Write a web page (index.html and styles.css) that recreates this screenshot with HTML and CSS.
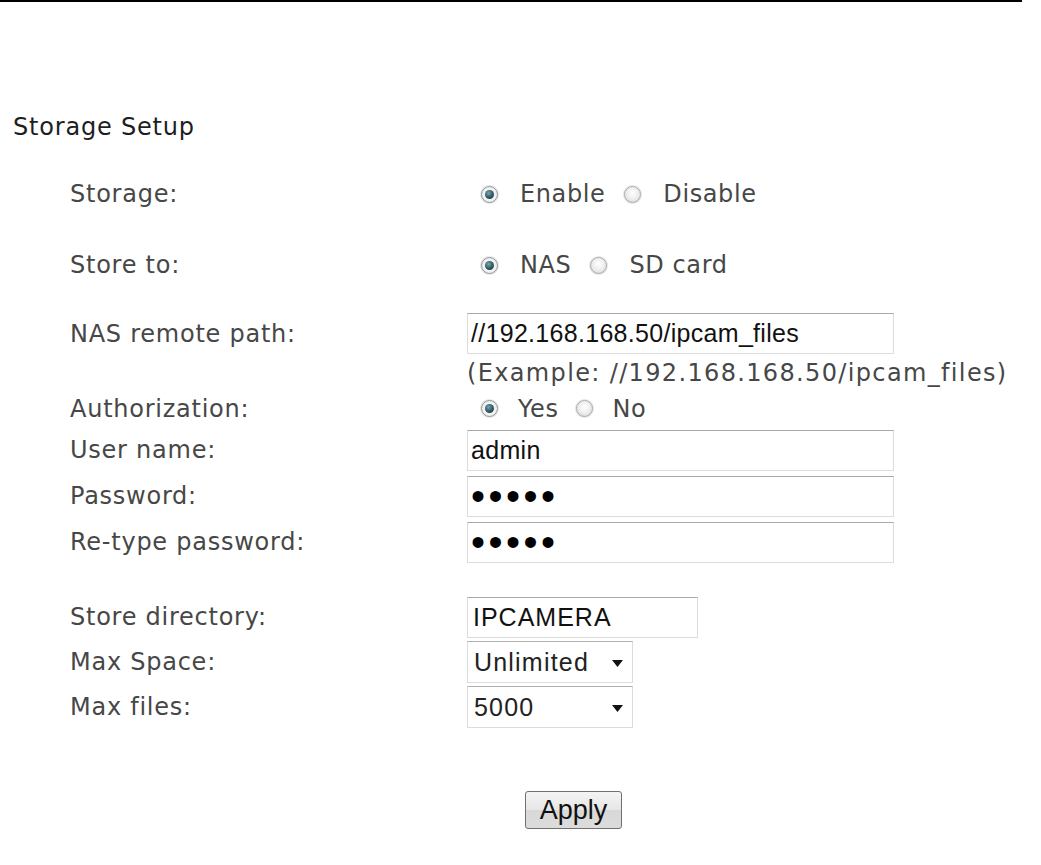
FILE: index.html
```html
<!DOCTYPE html>
<html>
<head>
<meta charset="utf-8">
<link rel="stylesheet" href="styles.css">
</head>
<body>
<div class="topline"></div>
<div class="page">
  <div class="title">Storage Setup</div>
  <div class="form">
    <div class="row r-storage">
      <div class="label">Storage:</div>
      <div class="value radios">
        <span class="radio on"></span><span class="rtext">Enable</span>
        <span class="radio"></span><span class="rtext">Disable</span>
      </div>
    </div>
    <div class="row r-storeto">
      <div class="label">Store to:</div>
      <div class="value radios">
        <span class="radio on"></span><span class="rtext">NAS</span>
        <span class="radio"></span><span class="rtext">SD card</span>
      </div>
    </div>
    <div class="row r-nas">
      <div class="label">NAS remote path:</div>
      <div class="value"><input class="field wide" type="text" value="//192.168.168.50/ipcam_files"></div>
    </div>
    <div class="row r-example">
      <div class="label"></div>
      <div class="value example">(Example: //192.168.168.50/ipcam_files)</div>
    </div>
    <div class="row r-auth">
      <div class="label">Authorization:</div>
      <div class="value radios tight">
        <span class="radio on"></span><span class="rtext">Yes</span>
        <span class="radio"></span><span class="rtext">No</span>
      </div>
    </div>
    <div class="row r-user">
      <div class="label">User name:</div>
      <div class="value"><input class="field wide" type="text" value="admin"></div>
    </div>
    <div class="row r-pass">
      <div class="label">Password:</div>
      <div class="value"><input class="field wide pw" type="password" value="admin"></div>
    </div>
    <div class="row r-pass">
      <div class="label">Re-type password:</div>
      <div class="value"><input class="field wide pw" type="password" value="admin"></div>
    </div>
    <div class="row r-dir">
      <div class="label">Store directory:</div>
      <div class="value"><input class="field short loose" type="text" value="IPCAMERA"></div>
    </div>
    <div class="row r-sel">
      <div class="label">Max Space:</div>
      <div class="value">
        <div class="select"><span>Unlimited</span>
          <svg class="arrow" width="11" height="7" viewBox="0 0 11 7"><path d="M0 0 H11 L5.5 7 Z" fill="#111"/></svg>
        </div>
      </div>
    </div>
    <div class="row r-sel">
      <div class="label">Max files:</div>
      <div class="value">
        <div class="select"><span>5000</span>
          <svg class="arrow" width="11" height="7" viewBox="0 0 11 7"><path d="M0 0 H11 L5.5 7 Z" fill="#111"/></svg>
        </div>
      </div>
    </div>
  </div>
  <div class="actions"><button class="apply" type="button">Apply</button></div>
</div>
</body>
</html>
```
FILE: styles.css
```css
html, body {
  margin: 0;
  padding: 0;
  background: #fff;
}
body {
  font-family: "DejaVu Sans", Verdana, sans-serif;
  color: #444;
}
.topline {
  width: 1022px;
  height: 2px;
  background: #000;
}
.page {
  padding-top: 110px;
}
.title {
  margin-left: 13px;
  font-size: 24px;
  letter-spacing: 0.8px;
  color: #1e1e1e;
  line-height: 30px;
}
.form {
  margin-top: 34px;
}
.row {
  display: flex;
  align-items: center;
}
.label {
  width: 397px;
  padding-left: 70px;
  font-size: 24px;
  letter-spacing: 0.75px;
  color: #474747;
  flex: none;
}
.value {
  display: flex;
  align-items: center;
}
.r-storage { height: 36px; }
.r-storeto { height: 36px; margin-top: 35px; }
.r-nas { height: 41px; margin-top: 30px; }
.r-example { height: 38px; }
.r-auth { height: 33px; }
.r-user { height: 42px; margin-top: 4px; }
.r-pass { height: 42px; margin-top: 4px; }
.r-dir { height: 42px; margin-top: 33px; }
.r-sel { height: 42px; margin-top: 3px; }

.radios {
  font-size: 24px;
  letter-spacing: 0.6px;
  color: #474747;
  padding-left: 14px;
}
.radio {
  width: 15px;
  height: 15px;
  border-radius: 50%;
  border: 1px solid #a9a9a9;
  background: radial-gradient(circle at 50% 40%, #ffffff 0%, #ececec 55%, #cfcfcf 100%);
  box-shadow: 0 0 0 1px #e6e6e6;
  box-sizing: content-box;
  flex: none;
  position: relative;
}
.radio.on {
  border-color: #8b9696;
  background: radial-gradient(circle, #ffffff 0%, #eeeeee 70%, #cfd4d4 100%);
}
.radio.on::after {
  content: "";
  position: absolute;
  left: 3px;
  top: 3px;
  width: 9px;
  height: 9px;
  border-radius: 50%;
  background: radial-gradient(circle at 40% 35%, #7aa6ad 0%, #2d5660 55%, #1a3036 100%);
}
.rtext {
  margin-left: 22px;
  margin-right: 19px;
}
.tight .rtext {
  margin-left: 20px;
  margin-right: 17px;
}

.field {
  box-sizing: border-box;
  height: 41px;
  border: 1px solid #dcdcdc;
  border-top-color: #a8a8a8;
  background: #fff;
  font-family: "Liberation Sans", Arial, sans-serif;
  font-size: 25px;
  letter-spacing: 0.3px;
  color: #111;
  padding: 0 0 0 3px;
  margin: 0;
  outline: none;
}
.wide { width: 427px; }
.short { width: 231px; }
.loose { letter-spacing: 1px; padding-left: 5px; }
.pw {
  font-size: 40px;
  letter-spacing: 3.5px;
  color: #000;
  padding-left: 3px;
}
.example {
  font-size: 24px;
  letter-spacing: 1.35px;
  color: #474747;
}
.select {
  box-sizing: border-box;
  width: 166px;
  height: 42px;
  border: 1px solid #dcdcdc;
  border-top-color: #b0b0b0;
  display: flex;
  align-items: center;
  justify-content: space-between;
  padding: 0 9px 0 6px;
  font-family: "Liberation Sans", Arial, sans-serif;
  font-size: 25px;
  letter-spacing: 1.2px;
  color: #222;
}
.arrow {
  display: block;
  margin-top: 2px;
}
.actions {
  display: flex;
  margin-top: 63px;
  padding-left: 525px;
}
.apply {
  box-sizing: border-box;
  width: 97px;
  height: 38px;
  border: 1px solid #707070;
  border-radius: 3px;
  background: linear-gradient(#f4f4f4, #e6e6e6 50%, #d8d8d8 51%, #dcdcdc);
  font-family: "Liberation Sans", Arial, sans-serif;
  font-size: 27px;
  color: #111;
  padding: 0;
  margin: 0;
}
```
